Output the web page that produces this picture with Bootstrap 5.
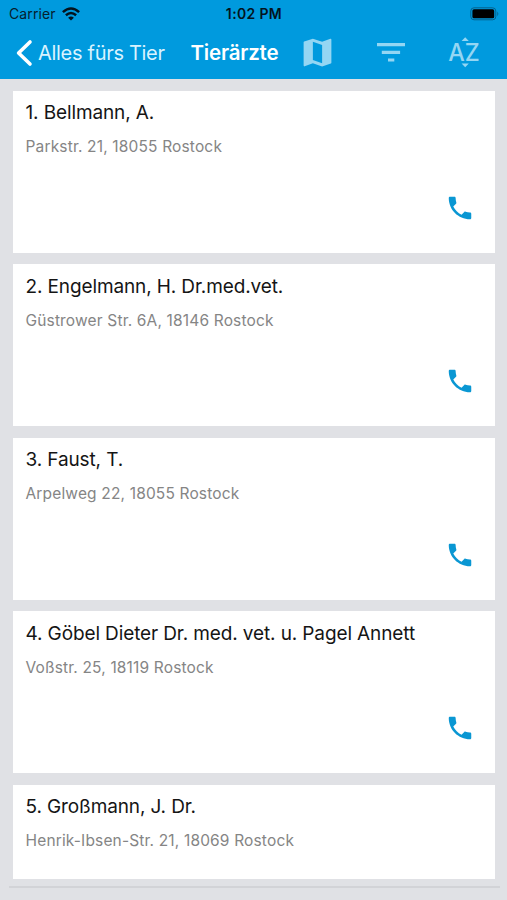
<!DOCTYPE html>
<html lang="de">
<head>
<meta charset="utf-8">
<meta name="viewport" content="width=device-width, initial-scale=1">
<title>Tierärzte</title>
<link href="https://cdn.jsdelivr.net/npm/bootstrap@5.3.0/dist/css/bootstrap.min.css" rel="stylesheet">
<style>
body{font-family:Inter,"Liberation Sans",sans-serif;background:#e0e1e5;height:900px;overflow:hidden}
.topbar{background:#009ade;height:79px;color:#fff}
.status{height:27px;font-size:14px;line-height:28px;color:#06202e}
.status .carrier{padding-left:9px;width:190px;gap:6px;letter-spacing:.1px}
.status .clock{font-weight:600;color:#03141e;width:128px;letter-spacing:.35px}
.status .battery{padding-right:7px;width:189px}
.tools{height:51px;padding-left:15px}
.back{width:175.5px;font-size:20px;line-height:50px;letter-spacing:-.3px;color:#d9f3ff}
.screen-title{width:108.5px;font-size:20.5px;font-weight:600;letter-spacing:-.2px;line-height:50px}
.tool{width:73.3px;color:#94d6f3}
.entries{padding:12px 12px 0 13px;gap:11.4px}
.entry{height:162px;padding:10.4px 22px 0 12.5px;background:#fff}
.entry-cut{height:94.5px}
.entry h2{font-size:19px;line-height:24px;margin:0;color:#151515;font-weight:400;letter-spacing:-.12px}
.entry p{font-size:15.5px;line-height:20px;margin:12px 0 0;color:#858585;letter-spacing:.16px}
.call{color:#0a97d3;height:30px;margin-top:35.7px}
.edge{height:2px;margin:6.5px 7px 0 9px;background:#d2d3d7}
</style>
<script src="https://cdn.jsdelivr.net/npm/bootstrap@5.3.0/dist/js/bootstrap.bundle.min.js"></script>
</head>
<body>
<svg class="d-none"><symbol id="phone" viewBox="0 0 24 24"><path fill="currentColor" d="M6.62 10.79c1.44 2.83 3.76 5.14 6.59 6.59l2.2-2.2c.27-.27.67-.36 1.02-.24 1.12.37 2.33.57 3.57.57.55 0 1 .45 1 1V20c0 .55-.45 1-1 1C10.61 21 3 13.39 3 4c0-.55.45-1 1-1h3.5c.55 0 1 .45 1 1 0 1.25.2 2.45.57 3.57.11.35.03.74-.25 1.02z"/></symbol></svg>
<header class="topbar">
  <div class="status d-flex">
    <div class="carrier d-flex align-items-center"><span>Carrier</span>
      <svg width="18" height="14" viewBox="0 0 18 14" fill="none" stroke="#03141e" stroke-width="2.5"><path d="M.9 5.2Q9-2.3 17.1 5.2M3.9 8.3q5.1-4.5 10.2 0"/><path d="M9 13.6 6.1 10.7q2.9-2.5 5.8 0z" fill="#03141e" stroke="none"/></svg>
    </div>
    <div class="clock text-center">1:02 PM</div>
    <div class="battery d-flex align-items-center justify-content-end">
      <svg width="30" height="14" viewBox="0 0 30 14"><rect x=".8" y=".8" width="25" height="12" rx="3.2" fill="none" stroke="#04628d"/><rect x="2.4" y="2.3" width="21.8" height="9" rx="1.6"/><path d="M27.3 4.6q2 2.3 0 4.6z" fill="#04628d"/></svg>
    </div>
  </div>
  <nav class="tools d-flex align-items-center">
    <a class="back d-flex flex-shrink-0 align-items-center text-decoration-none text-nowrap" href="#"><svg class="flex-shrink-0" width="23" height="28" viewBox="0 0 23 28" fill="none" stroke="#fff" stroke-width="3.6" stroke-linecap="round" stroke-linejoin="round"><path d="M15 3 3.6 14 15 25"/></svg>Alles fürs Tier</a>
    <h1 class="screen-title flex-shrink-0 m-0">Tierärzte</h1>
    <div class="d-flex flex-shrink-0">
      <div class="tool"><svg width="42" height="37" viewBox="0 0 27.24 24"><path fill="currentColor" d="M20.5 3l-.16.03L15 5.1 9 3 3.36 4.9c-.21.07-.36.25-.36.48V20.5c0 .28.22.5.5.5l.16-.03L9 18.9l6 2.1 5.64-1.9c.21-.07.36-.25.36-.48V3.5c0-.28-.22-.5-.5-.5zM15 19l-6-2.11V5l6 2.11V19z"/></svg></div>
      <div class="tool"><svg width="40" height="37" viewBox="0 0 40 37" fill="currentColor"><path d="M5 9h28v3.2H5zM9.8 16.8h18.3V20H9.8zM16 24.4h6.3v3.2H16z"/></svg></div>
      <div class="tool"><svg width="40" height="37" viewBox="0 0 40 37" fill="currentColor"><text x="2.2" y="27" font-size="24.5" font-weight="500" textLength="31.5" lengthAdjust="spacingAndGlyphs">AZ</text><path d="M19.2 3.2l3.6 3.7h-7.2zM19.2 33.2l3.6-3.7h-7.2z"/></svg></div>
    </div>
  </nav>
</header>
<main class="entries d-flex flex-column">
  <article class="entry"><h2>1. Bellmann, A.</h2><p>Parkstr. 21, 18055 Rostock</p><div class="call d-flex justify-content-end"><svg width="27" height="30"><use href="#phone" width="30" height="30" x="-1"/></svg></div></article>
  <article class="entry"><h2>2. Engelmann, H. Dr.med.vet.</h2><p>Güstrower Str. 6A, 18146 Rostock</p><div class="call d-flex justify-content-end"><svg width="27" height="30"><use href="#phone" width="30" height="30" x="-1"/></svg></div></article>
  <article class="entry"><h2>3. Faust, T.</h2><p>Arpelweg 22, 18055 Rostock</p><div class="call d-flex justify-content-end"><svg width="27" height="30"><use href="#phone" width="30" height="30" x="-1"/></svg></div></article>
  <article class="entry"><h2>4. Göbel Dieter Dr. med. vet. u. Pagel Annett</h2><p>Voßstr. 25, 18119 Rostock</p><div class="call d-flex justify-content-end"><svg width="27" height="30"><use href="#phone" width="30" height="30" x="-1"/></svg></div></article>
  <article class="entry entry-cut"><h2>5. Großmann, J. Dr.</h2><p>Henrik-Ibsen-Str. 21, 18069 Rostock</p></article>
</main>
<div class="edge"></div>
</body>
</html>
